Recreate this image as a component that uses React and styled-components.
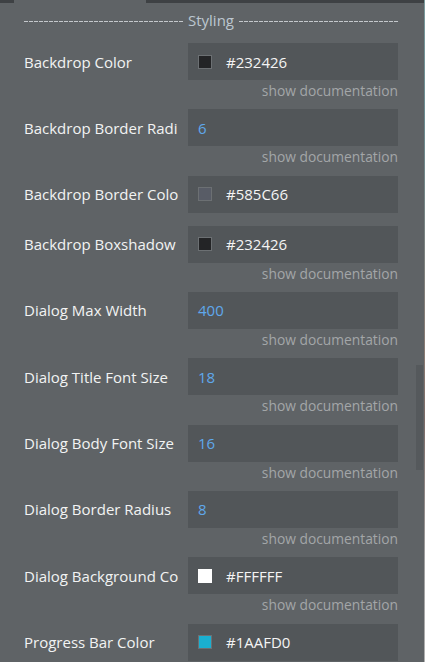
import styled, { createGlobalStyle } from 'styled-components';

const GlobalStyle = createGlobalStyle`
  html, body {
    margin: 0;
    padding: 0;
    background: #5f6366;
  }
  body {
    font-family: "Open Sans", "Noto Sans", sans-serif;
  }
`;

const Panel = styled.div`
  position: relative;
  width: 425px;
  height: 662px;
  overflow: hidden;
  background: #5f6366;
`;

const TopBar = styled.div`
  display: flex;
  height: 3px;
`;

const BarPart = styled.div`
  background: ${(p) => (p.$active ? '#5f6366' : '#3e4144')};
  width: ${(p) => p.$w || 'auto'};
  flex: ${(p) => (p.$w ? 'none' : 1)};
`;

const Content = styled.div`
  padding: 7px 27px 0 24px;
`;

const SectionTitle = styled.div`
  display: flex;
  align-items: center;
  gap: 5px;
  height: 20px;
  color: #bcc7d0;
  font-size: 15px;
  margin-bottom: 13px;
`;

const DashLine = styled.span`
  flex: 1;
  height: 1px;
  margin-top: 3px;
  background: repeating-linear-gradient(90deg, #c4c8cc 0 4px, transparent 4px 5px);
`;

const Field = styled.div`
  margin-bottom: ${(p) => (p.$doc ? '9.33px' : '13px')};
`;

const Row = styled.div`
  display: flex;
  align-items: center;
  gap: 8px;
`;

const Label = styled.div`
  width: 156px;
  flex: none;
  white-space: nowrap;
  color: #f2f3f3;
  font-size: 15px;
`;

const Input = styled.div`
  width: 210px;
  height: 37px;
  background: #525659;
  display: flex;
  align-items: center;
  padding-left: 10px;
  box-sizing: border-box;
  gap: 14px;
`;

const Swatch = styled.span`
  width: 14px;
  height: 14px;
  box-sizing: border-box;
  background: ${(p) => p.$color};
  border: 1px solid ${(p) => (p.$color === '#FFFFFF' ? '#ffffff' : '#6c7073')};
`;

const Value = styled.span`
  font-size: 15px;
  color: ${(p) => (p.$num ? '#5fa8ec' : '#f4f4f4')};
`;

const Doc = styled.div`
  text-align: right;
  color: #a3a6a8;
  font-size: 13.8px;
  line-height: 18px;
  margin-top: 2px;
`;

const Scrollbar = styled.div`
  position: absolute;
  right: 2px;
  top: 365px;
  width: 7px;
  height: 105px;
  background: #55595c;
`;

const EdgeStrip = styled.div`
  position: absolute;
  right: 0;
  top: 0;
  width: 1px;
  height: 662px;
  background: linear-gradient(#7a9a9c 0, #6a8a8e 120px, #8a7a72 360px, #7b6a66 420px, #a0a0a0 560px, #b0b0b0 662px);
`;

const fields = [
  { label: 'Backdrop Color', color: '#232426', doc: true },
  { label: 'Backdrop Border Radi', value: '6', doc: true },
  { label: 'Backdrop Border Colo', color: '#585C66' },
  { label: 'Backdrop Boxshadow', color: '#232426', doc: true },
  { label: 'Dialog Max Width', value: '400', doc: true },
  { label: 'Dialog Title Font Size', value: '18', doc: true },
  { label: 'Dialog Body Font Size', value: '16', doc: true },
  { label: 'Dialog Border Radius', value: '8', doc: true },
  { label: 'Dialog Background Co', color: '#FFFFFF', doc: true },
  { label: 'Progress Bar Color', color: '#1AAFD0' },
];

export default function App() {
  return (
    <Panel>
      <GlobalStyle />
      <TopBar>
        <BarPart $w="14px" />
        <BarPart $w="132px" $active />
        <BarPart />
      </TopBar>
      <Content>
        <SectionTitle>
          <DashLine />
          <span>Styling</span>
          <DashLine />
        </SectionTitle>
        {fields.map((f) => (
          <Field key={f.label} $doc={f.doc}>
            <Row>
              <Label>{f.label}</Label>
              <Input>
                {f.color ? (
                  <>
                    <Swatch $color={f.color} />
                    <Value>{f.color}</Value>
                  </>
                ) : (
                  <Value $num>{f.value}</Value>
                )}
              </Input>
            </Row>
            {f.doc && <Doc>show documentation</Doc>}
          </Field>
        ))}
      </Content>
      <Scrollbar />
      <EdgeStrip />
    </Panel>
  );
}
